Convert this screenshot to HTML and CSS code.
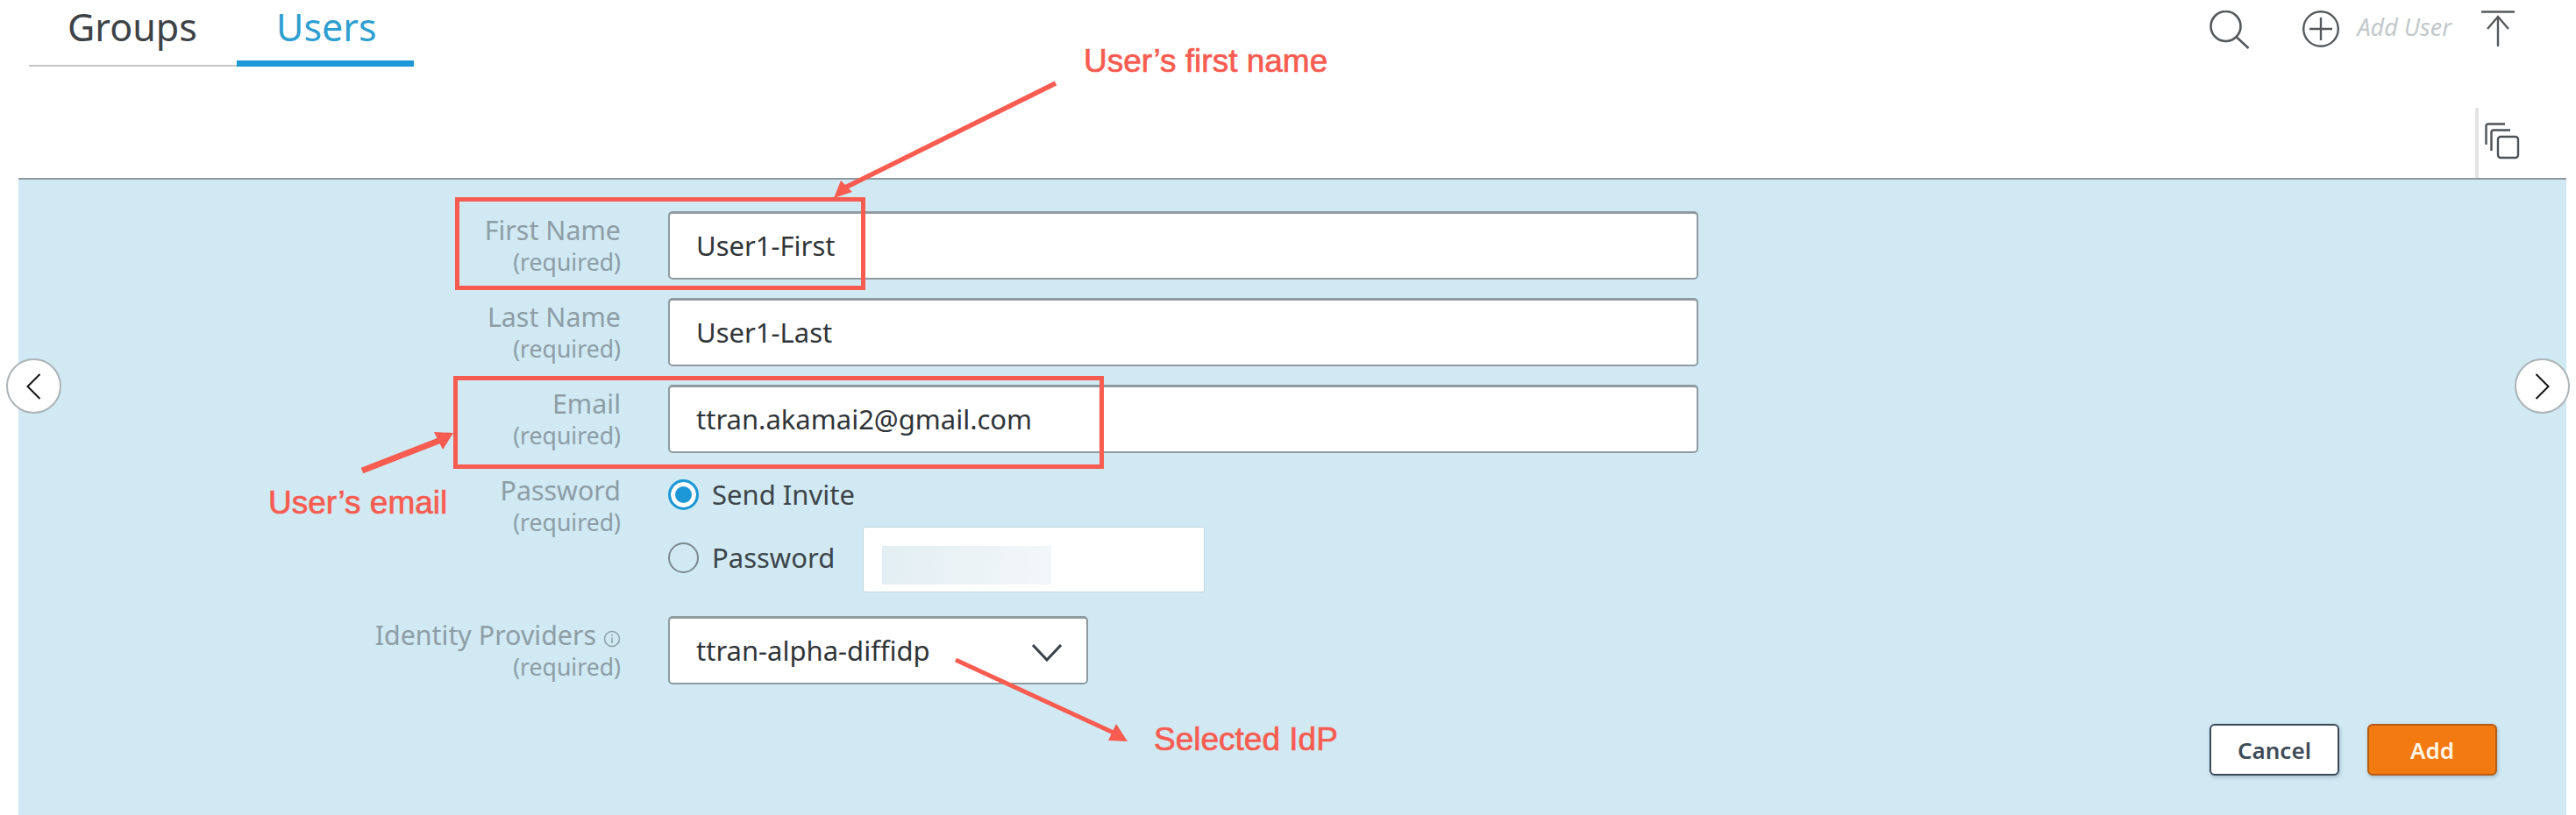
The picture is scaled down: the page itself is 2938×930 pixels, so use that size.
FILE: index.html
```html
<!DOCTYPE html>
<html lang="en">
<head>
    <meta charset="UTF-8">
    <meta name="viewport" content="width=device-width, initial-scale=1.0">
    <title>Users</title>
    <link rel="stylesheet" href="styles.css">
</head>
<body>
    <div class="page">
        <header class="header">
            <div class="topbar">
                <nav class="tabs">
                    <a class="tab tab-groups">Groups</a>
                    <a class="tab tab-users">Users</a>
                </nav>
                <div class="tools">
                    <svg class="icon-search" width="46" height="44" viewBox="0 0 46 44" fill="none" stroke="#55595c" stroke-width="2.6">
                        <circle cx="18.5" cy="18" r="17"/>
                        <path d="M31 30.5 L44.5 43"/>
                    </svg>
                    <svg class="icon-plus" width="44" height="42" viewBox="0 0 44 42" fill="none" stroke="#55595c" stroke-width="2.4">
                        <circle cx="22" cy="21" r="19.8"/>
                        <path d="M22 8 V34 M9 21 H35"/>
                    </svg>
                    <span class="add-user">Add User</span>
                    <svg class="icon-top" width="38" height="42" viewBox="0 0 38 42" fill="none" stroke="#55595c" stroke-width="2.4">
                        <path d="M0 1.5 H38"/>
                        <path d="M19 41 V7 M7 21 L19 7 L31 21"/>
                    </svg>
                </div>
            </div>
            <div class="subbar">
                <div class="copy-tool">
                    <svg width="40" height="42" viewBox="0 0 40 42" fill="none" stroke="#4c5257" stroke-width="2.4">
                        <path d="M1.5 25 V4 Q1.5 1.5 4 1.5 H23"/>
                        <path d="M7.5 32 V11 Q7.5 8.5 10 8.5 H29"/>
                        <rect x="15" y="16" width="23" height="24" rx="3"/>
                    </svg>
                </div>
            </div>
        </header>

        <main class="panel">
            <form class="user-form">
                <div class="row">
                    <div class="label"><span>First Name</span><small>(required)</small></div>
                    <div class="field">User1-First</div>
                </div>
                <div class="row">
                    <div class="label"><span>Last Name</span><small>(required)</small></div>
                    <div class="field">User1-Last</div>
                </div>
                <div class="row">
                    <div class="label"><span>Email</span><small>(required)</small></div>
                    <div class="field">ttran.akamai2@gmail.com</div>
                </div>
                <div class="row row-password">
                    <div class="label"><span>Password</span><small>(required)</small></div>
                    <div class="options">
                        <div class="option option-invite">
                            <span class="radio radio-on"></span>
                            <span>Send Invite</span>
                        </div>
                        <div class="option option-password">
                            <span class="radio"></span>
                            <span>Password</span>
                            <div class="password-box"><div class="blurred"></div></div>
                        </div>
                    </div>
                </div>
                <div class="row row-idp">
                    <div class="label">
                        <span>Identity Providers
                            <svg class="icon-info" width="20" height="20" viewBox="0 0 20 20" fill="none" stroke="#8f9ea6" stroke-width="1.5">
                                <circle cx="10" cy="10" r="8.5"/>
                                <path d="M10 8.5 V15 M10 5 V6.8"/>
                            </svg>
                        </span>
                        <small>(required)</small>
                    </div>
                    <div class="select">
                        <span>ttran-alpha-diffidp</span>
                        <svg width="34" height="20" viewBox="0 0 34 20" fill="none" stroke="#3b4248" stroke-width="3">
                            <path d="M1 1 L17 18 L33 1"/>
                        </svg>
                    </div>
                </div>
                <div class="actions">
                    <button type="button" class="btn btn-cancel">Cancel</button>
                    <button type="button" class="btn btn-add">Add</button>
                </div>
            </form>
        </main>

        <button type="button" class="pager pager-left">
            <svg width="17" height="30" viewBox="0 0 17 30" fill="none" stroke="#111" stroke-width="2"><path d="M15.5 1 L1.5 15 L15.5 29"/></svg>
        </button>
        <button type="button" class="pager pager-right">
            <svg width="17" height="30" viewBox="0 0 17 30" fill="none" stroke="#111" stroke-width="2"><path d="M1.5 1 L15.5 15 L1.5 29"/></svg>
        </button>

        <!-- annotations drawn on top of the screenshot -->
        <svg class="marks" width="2938" height="930" viewBox="0 0 2938 930" fill="none">
            <rect x="521.5" y="227.5" width="463" height="101" stroke="#f85c50" stroke-width="5"/>
            <rect x="519.5" y="431.5" width="737" height="101" stroke="#f85c50" stroke-width="5"/>
            <path d="M1204 95 L962 215" stroke="#f85c50" stroke-width="5.5"/>
            <path d="M951 226 L959 206 L972 219 Z" fill="#f85c50"/>
            <path d="M413 537 L503 502" stroke="#f85c50" stroke-width="7"/>
            <path d="M517 494 L495 493 L505 513 Z" fill="#f85c50"/>
            <path d="M1090 753 L1274 838" stroke="#f85c50" stroke-width="5"/>
            <path d="M1286 846 L1264 845 L1273 826 Z" fill="#f85c50"/>
        </svg>
        <div class="note note-first">User’s first name</div>
        <div class="note note-email">User’s email</div>
        <div class="note note-idp">Selected IdP</div>
    </div>
</body>
</html>
```

FILE: styles.css
```css
html, body {
    margin: 0;
    padding: 0;
    background: #fff;
}
.page {
    position: relative;
    width: 2938px;
    height: 930px;
    overflow: hidden;
    font-family: "Noto Sans", Arial, sans-serif;
}
.header {
    height: 203px;
}
.topbar {
    display: flex;
    justify-content: space-between;
    height: 76px;
    padding: 0 70px 0 33px;
}
.tabs {
    display: flex;
    align-items: flex-end;
    height: 76px;
    background: linear-gradient(#c6c6c6, #c6c6c6) left 74px / 237px 2px no-repeat;
}
.tab {
    display: block;
    box-sizing: border-box;
    height: 76px;
    font-size: 43px;
    line-height: 62px;
}
.tab-groups {
    width: 237px;
    padding-left: 44px;
    color: #3d4246;
}
.tab-users {
    width: 202px;
    padding-left: 45px;
    color: #2f9fd0;
    border-bottom: 7px solid #1b98d5;
}
.tools {
    display: flex;
    align-items: flex-start;
    padding-top: 12px;
}
.icon-plus {
    margin-left: 59px;
}
.add-user {
    margin-left: 19px;
    font-size: 27px;
    font-style: italic;
    line-height: 38px;
    color: #c3c8cb;
}
.icon-top {
    margin-left: 34px;
}
.subbar {
    display: flex;
    justify-content: flex-end;
    height: 127px;
    padding-right: 64px;
}
.copy-tool {
    display: flex;
    box-sizing: border-box;
    height: 80px;
    margin-top: 47px;
    padding: 17px 0 0 7px;
    border-left: 4px solid #e4e4e4;
}
.panel {
    box-sizing: border-box;
    height: 727px;
    margin: 0 11px 0 21px;
    background: #d0e9f3;
    border-top: 2px solid #8e9aa0;
}
.user-form {
    padding: 36px 79px 0 0;
}
.row {
    display: grid;
    grid-template-columns: 687px 1175px;
    column-gap: 54px;
    margin-bottom: 21px;
}
.label {
    padding-top: 3px;
    text-align: right;
    font-size: 30.4px;
    line-height: 37px;
    color: #8e9da5;
}
.label span, .label small {
    display: block;
}
.label small {
    font-size: 26.6px;
}
.field, .select {
    box-sizing: border-box;
    height: 78px;
    padding-left: 30px;
    background: #fff;
    border: 2px solid #8f9aa1;
    border-top-width: 3px;
    border-radius: 5px;
    font-size: 31px;
    line-height: 73px;
    color: #2f3438;
}
.row-password {
    margin-bottom: 27px;
}
.options {
    padding-top: 9px;
    font-size: 31px;
    color: #3d4449;
}
.option {
    display: flex;
    align-items: flex-start;
    column-gap: 15px;
    line-height: 35px;
}
.option-password {
    height: 57px;
    margin-top: 37px;
}
.radio {
    box-sizing: border-box;
    flex: none;
    width: 35px;
    height: 35px;
    background: transparent;
    border: 2px solid #7c878e;
    border-radius: 50%;
}
.radio-on {
    background: #1b98d5;
    border: 3px solid #1b98d5;
    box-shadow: inset 0 0 0 5px #fff;
}
.password-box {
    box-sizing: border-box;
    width: 390px;
    height: 75px;
    margin: -18px 0 0 17px;
    padding: 21px 0 0 21px;
    background: #fff;
    border: 1px solid #c3d6de;
    border-radius: 3px;
}
.blurred {
    width: 193px;
    height: 44px;
    background: linear-gradient(100deg, #e2eef3, #f3f7f9);
}
.row-idp {
    grid-template-columns: 687px 479px;
}
.icon-info {
    vertical-align: -3px;
}
.select {
    display: flex;
    justify-content: space-between;
    padding-right: 28px;
}
.select svg {
    margin-top: 29px;
}
.actions {
    display: flex;
    justify-content: flex-end;
    column-gap: 32px;
    margin-top: 45px;
}
.btn {
    width: 148px;
    height: 59px;
    border-radius: 6px;
    font-family: inherit;
    font-size: 26px;
    font-weight: 600;
    box-shadow: 1px 2px 4px rgba(60, 90, 110, 0.3);
}
.btn-cancel {
    background: #fff;
    border: 2px solid #3a4a57;
    color: #3f4c58;
}
.btn-add {
    background: #f27a10;
    border: 2px solid #b65c14;
    color: #fff4e6;
}
.pager {
    position: absolute;
    display: flex;
    justify-content: center;
    align-items: center;
    top: 409px;
    width: 63px;
    height: 63px;
    padding: 0;
    background: #fff;
    border: 2px solid #adb3b6;
    border-radius: 50%;
}
.pager-left {
    left: 7px;
}
.pager-right {
    left: 2868px;
}
.marks {
    position: absolute;
    top: 0;
    left: 0;
}
.note {
    position: absolute;
    font-family: "Liberation Sans", Arial, sans-serif;
    font-size: 37px;
    line-height: 44px;
    color: #f85c50;
    white-space: nowrap;
    -webkit-text-stroke: 0.7px #f85c50;
}
.note-first {
    top: 48px;
    left: 1236px;
}
.note-email {
    top: 552px;
    left: 306px;
}
.note-idp {
    top: 822px;
    left: 1316px;
}
```
